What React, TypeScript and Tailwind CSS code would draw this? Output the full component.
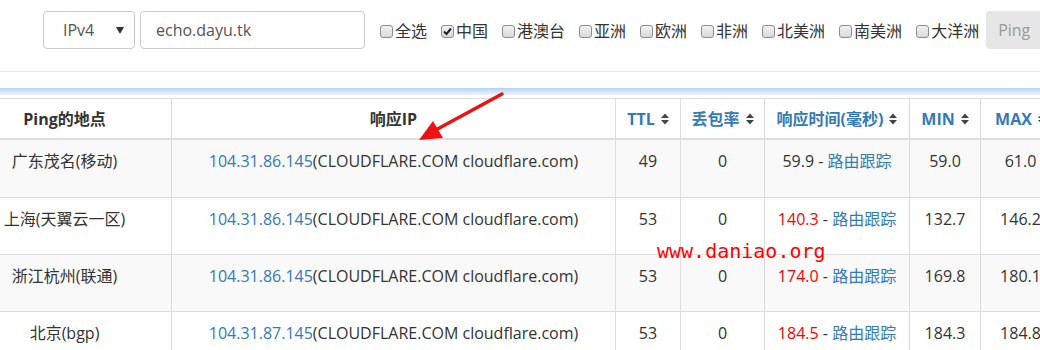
import React from "react";

const SortIcon = () => (
  <svg width="8" height="12" viewBox="0 0 8 12" className="inline-block ml-[6px] align-[-1px]">
    <polygon points="0,5 4,0.5 8,5" fill="#444" />
    <polygon points="0,7 4,11.5 8,7" fill="#444" />
  </svg>
);

const Box = ({ checked }: { checked?: boolean }) => (
  <span className="relative inline-block w-[13px] h-[13px] rounded-[3px] border border-[#8d8d8d] bg-gradient-to-b from-[#f2f2f2] to-[#d9d9d9] mr-[2px] shrink-0">
    {checked && (
      <svg width="11" height="11" viewBox="0 0 11 11" className="absolute left-0 top-0">
        <path d="M2 5.5 L4.5 8 L9 2.5" stroke="#222" strokeWidth="2" fill="none" />
      </svg>
    )}
  </span>
);

const regions = [
  { t: "全选" },
  { t: "中国", c: true },
  { t: "港澳台" },
  { t: "亚洲" },
  { t: "欧洲" },
  { t: "非洲" },
  { t: "北美洲" },
  { t: "南美洲" },
  { t: "大洋洲" },
];

const rows = [
  { loc: "广东茂名(移动)", ip: "104.31.86.145", ttl: "49", loss: "0", rt: "59.9", red: false, min: "59.0", max: "61.0" },
  { loc: "上海(天翼云一区)", ip: "104.31.86.145", ttl: "53", loss: "0", rt: "140.3", red: true, min: "132.7", max: "146.2" },
  { loc: "浙江杭州(联通)", ip: "104.31.86.145", ttl: "53", loss: "0", rt: "174.0", red: true, min: "169.8", max: "180.1" },
  { loc: "北京(bgp)", ip: "104.31.87.145", ttl: "53", loss: "0", rt: "184.5", red: true, min: "184.3", max: "184.8" },
];

const cols = "grid grid-cols-[213px_444px_65px_84px_145px_71px_80px]";

export default function App() {
  return (
    <div className="relative w-[1040px] h-[350px] overflow-hidden bg-white text-[16px] text-[#333] font-['Open_Sans','Noto_Sans_CJK_SC',sans-serif]">
      {/* toolbar */}
      <div className="h-[72px] border-b border-[#e5e5e5] pt-[11px] pl-[43px]">
        <div className="flex items-center h-[38px] w-max">
          <div className="shrink-0 flex items-center w-[92px] h-[38px] border border-[#ccc] rounded-[4px] pl-[19px] pr-[10px] text-[#555]">
            <span className="flex-1">IPv4</span>
            <svg width="8" height="7" viewBox="0 0 8 7"><polygon points="0,0 8,0 4,7" fill="#333" /></svg>
          </div>
          <div className="shrink-0 ml-[5px] flex items-center w-[225px] h-[38px] border border-[#ccc] rounded-[4px] pl-[15px] text-[#555]">
            echo.dayu.tk
          </div>
          <div className="shrink-0 ml-[15px] flex items-center gap-[14px] pt-[2px]">
            {regions.map((r) => (
              <label key={r.t} className="flex items-center whitespace-nowrap">
                <Box checked={r.c} />
                <span>{r.t}</span>
              </label>
            ))}
          </div>
          <div className="ml-[7px] h-[38px] w-[70px] shrink-0 rounded-[4px] bg-[#e6e6e6] flex items-center pl-[12px] text-[#9a9a9a]">
            Ping
          </div>
        </div>
      </div>

      {/* blue band */}
      <div className="mt-[16px] h-[7px] bg-gradient-to-b from-[#b5d1f3] to-[#eef5fd]" />
      <div className="h-[3px]" />

      {/* table */}
      <div className="ml-[-42px] w-[1102px]">
        <div className={`${cols} border-t border-[#ddd] border-b-2 font-bold`}>
          <div className="h-[39px] flex items-center justify-center">Ping的地点</div>
          <div className="h-[39px] flex items-center justify-center border-l border-[#ddd]">响应IP</div>
          <div className="h-[39px] flex items-center justify-center border-l border-[#ddd] text-[#337ab7]">TTL<SortIcon /></div>
          <div className="h-[39px] flex items-center justify-center border-l border-[#ddd] text-[#337ab7]">丢包率<SortIcon /></div>
          <div className="h-[39px] flex items-center justify-center border-l border-[#ddd] text-[#337ab7]">响应时间(毫秒)<SortIcon /></div>
          <div className="h-[39px] flex items-center justify-center border-l border-[#ddd] text-[#337ab7]">MIN<SortIcon /></div>
          <div className="h-[39px] flex items-center justify-center border-l border-[#ddd] text-[#337ab7]">MAX<SortIcon /></div>
        </div>
        {rows.map((r, i) => (
          <div
            key={i}
            className={`${cols} ${i > 0 ? "border-t border-[#ddd]" : ""} ${i % 2 === 0 ? "bg-[#f9f9f9]" : "bg-white"} h-[57px] leading-[23px] text-center`}
          >
            <div className="pt-[10px]">{r.loc}</div>
            <div className="pt-[10px] border-l border-[#ddd]">
              <span className="text-[#337ab7]">{r.ip}</span>(CLOUDFLARE.COM cloudflare.com)
            </div>
            <div className="pt-[10px] border-l border-[#ddd]">{r.ttl}</div>
            <div className="pt-[10px] border-l border-[#ddd]">{r.loss}</div>
            <div className="pt-[10px] border-l border-[#ddd]">
              <span className={r.red ? "text-[#ff0000]" : ""}>{r.rt}</span> - <span className="text-[#337ab7]">路由跟踪</span>
            </div>
            <div className="pt-[10px] border-l border-[#ddd]">{r.min}</div>
            <div className="pt-[10px] border-l border-[#ddd]">{r.max}</div>
          </div>
        ))}
      </div>

      {/* red arrow annotation */}
      <svg className="absolute left-0 top-0 pointer-events-none" width="1040" height="350">
        <line x1="502" y1="94" x2="432" y2="132" stroke="#ee1111" strokeWidth="3.5" strokeLinecap="round" />
        <polygon points="419,140 433,121 443,138" fill="#ee1111" />
      </svg>

      {/* watermark */}
      <div className="absolute left-[657px] top-[241px] leading-[20px] text-[20px] text-[#ff0000] font-['DejaVu_Sans_Mono',monospace]">
        www.daniao.org
      </div>
    </div>
  );
}
